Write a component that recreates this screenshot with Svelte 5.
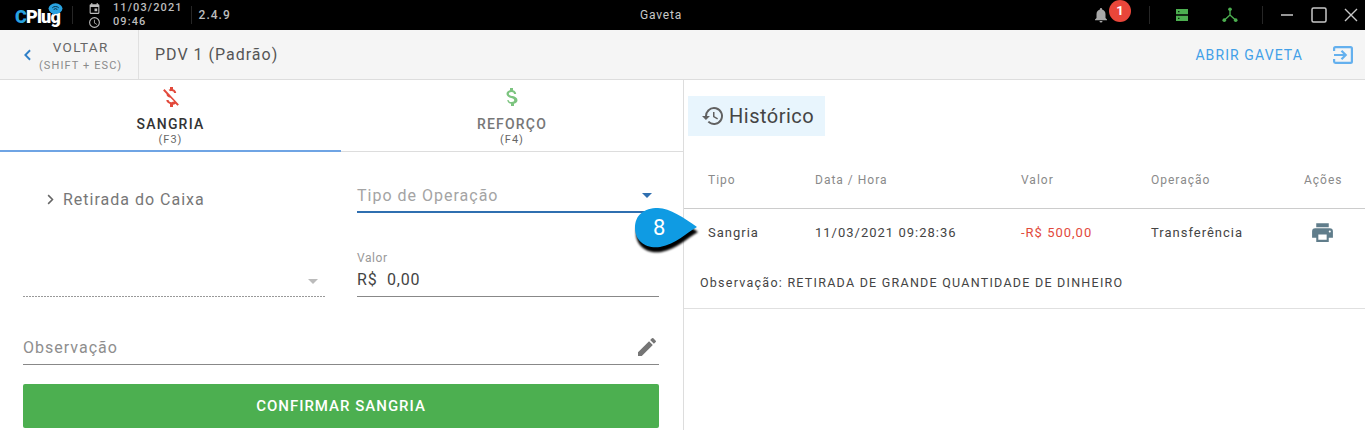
<script>
  const columns = ["Tipo", "Data / Hora", "Valor", "Operação", "Ações"];
</script>

<div class="app">
  <header class="titlebar">
    <div class="logo">
      <span class="logo-c">C</span><span class="logo-text">Plug</span>
      <svg class="logo-wifi" viewBox="0 0 16 14" width="15" height="13">
        <ellipse cx="8" cy="6" rx="7.5" ry="5.6" fill="#29a3e0" />
        <path d="M5 13l1-4 3 2z" fill="#29a3e0" />
        <path d="M4.5 5.2a5 5 0 0 1 7 0M6 7a3 3 0 0 1 4 0" fill="none" stroke="#06283a" stroke-width="1" />
      </svg>
    </div>
    <i class="sep logo-sep"></i>
    <div class="datetime">
      <div class="dt-icons">
        <svg viewBox="0 0 24 24" width="13" height="13"><path fill="#bdbdbd" d="M19 4h-1V2h-2v2H8V2H6v2H5a2 2 0 0 0-2 2v14a2 2 0 0 0 2 2h14a2 2 0 0 0 2-2V6a2 2 0 0 0-2-2zm0 16H5V9h14zM12 12h5v5h-5z" /></svg>
        <svg viewBox="0 0 24 24" width="13" height="13"><path fill="#bdbdbd" d="M12 2a10 10 0 1 0 0 20 10 10 0 0 0 0-20zm0 18a8 8 0 1 1 0-16 8 8 0 0 1 0 16zm.5-13H11v6l5.2 3.2.8-1.2-4.5-2.7z" /></svg>
      </div>
      <div class="dt-text"><span>11/03/2021</span><span>09:46</span></div>
    </div>
    <i class="sep date-sep"></i>
    <span class="version">2.4.9</span>
    <span class="window-title">Gaveta</span>
    <div class="tray">
      <div class="bell">
        <svg viewBox="0 0 24 24" width="18" height="18"><path fill="#a8a8a8" d="M12 22a2 2 0 0 0 2-2h-4a2 2 0 0 0 2 2zm6-6v-5c0-3.1-1.6-5.600-4.500-6.300V4a1.500 1.500 0 0 0-3 0v.7C7.600 5.400 6 7.900 6 11v5l-2 2v1h16v-1z" /></svg>
        <span class="badge">1</span>
      </div>
      <i class="sep tray-sep-a"></i>
      <svg class="tray-server" viewBox="0 0 12 12" width="12" height="12">
        <path fill="#4caf50" d="M0 0h12v5.300H0zM0 6.700h12V12H0z" />
        <path fill="#0a2a0a" d="M2 2h1.500v1.300H2zM2 8.700h1.500V10H2z" />
      </svg>
      <svg class="tray-net" viewBox="0 0 14 14" width="16" height="16">
        <path fill="none" stroke="#4caf50" stroke-width="1.200" d="M7 2v5L2 11.500M7 7l5 4.500" />
        <circle cx="7" cy="2" r="1.600" fill="#4caf50" /><circle cx="2" cy="11.500" r="1.600" fill="#4caf50" /><circle cx="12" cy="11.500" r="1.600" fill="#4caf50" />
      </svg>
      <i class="sep tray-sep-b"></i>
    </div>
    <div class="win-buttons">
      <svg viewBox="0 0 14 14" width="14" height="14"><path stroke="#c8c8c8" stroke-width="1.500" d="M1 7h12" /></svg>
      <svg viewBox="0 0 16 16" width="16" height="16"><rect x="1" y="1" width="14" height="14" rx="1.500" fill="none" stroke="#c8c8c8" stroke-width="1.500" /></svg>
      <svg viewBox="0 0 14 14" width="14" height="14"><path stroke="#c8c8c8" stroke-width="1.400" d="M1 1l12 12M13 1L1 13" /></svg>
    </div>
  </header>

  <div class="toolbar">
    <div class="back">
      <svg viewBox="0 0 10 14" width="9" height="12"><path fill="none" stroke="#2f80c8" stroke-width="2.200" d="M8 1.500L2.500 7 8 12.500" /></svg>
      <div class="back-text"><span>VOLTAR</span><small>(SHIFT + ESC)</small></div>
    </div>
    <div class="pdv">PDV 1 (Padrão)</div>
    <span class="open-drawer">ABRIR GAVETA</span>
    <svg class="exit-icon" viewBox="0 0 20 18" width="20" height="18">
      <path fill="none" stroke="#64b0ee" stroke-width="2.200" d="M1.100 5V2.500a1.400 1.400 0 0 1 1.400-1.400h15a1.400 1.400 0 0 1 1.400 1.400v13a1.400 1.400 0 0 1-1.400 1.400h-15a1.400 1.400 0 0 1-1.400-1.400V13M1 9h11M8.500 4.800 12.700 9l-4.200 4.200" />
    </svg>
  </div>

  <main class="content">
    <section class="left">
      <div class="tabs">
        <div class="tab active">
          <svg viewBox="0 0 24 24" width="24" height="24"><path fill="#e2493b" d="M12.500 5.900c1.800 0 2.400.9 2.500 2.100h2.200c-.1-1.700-1.100-3.300-3.200-3.800V2h-3v2.200c-.5.1-1 .3-1.400.5l1.500 1.500c.4-.2.900-.3 1.400-.3zM5.500 4.100 4.100 5.500 7.500 8.900c0 2.100 1.600 3.200 3.900 3.900l3.500 3.500c-.3.500-1 .9-2.400.9-2 0-2.800-.9-2.900-2.100H7.300c.1 2.200 1.800 3.400 3.700 3.800V22h3v-2.200c1-.2 1.800-.6 2.400-1.100l2.100 2.100 1.400-1.400z" /></svg>
          <strong>SANGRIA</strong>
          <small>(F3)</small>
        </div>
        <div class="tab">
          <svg viewBox="0 0 24 24" width="24" height="24"><path fill="#7cc47f" d="M11.800 10.900c-2.300-.6-3-1.200-3-2.100 0-1.100 1-1.900 2.700-1.900 1.800 0 2.400.8 2.500 2.100h2.200c-.1-1.700-1.100-3.300-3.200-3.800V3h-3v2.200c-1.900.4-3.500 1.700-3.500 3.600 0 2.300 1.900 3.500 4.700 4.100 2.500.6 3 1.500 3 2.400 0 .7-.5 1.800-2.700 1.800-2 0-2.800-.9-2.900-2.100H7.300c.1 2.200 1.800 3.400 3.700 3.800V21h3v-2.200c1.900-.4 3.500-1.500 3.500-3.500 0-2.800-2.400-3.800-4.700-4.400z" /></svg>
          <strong>REFORÇO</strong>
          <small>(F4)</small>
        </div>
      </div>

      <div class="form">
        <div class="form-row first">
          <div class="withdraw">
            <svg viewBox="0 0 10 14" width="9" height="11"><path fill="none" stroke="#666" stroke-width="2" d="M2 1.500 7.500 7 2 12.500" /></svg>
            <span>Retirada do Caixa</span>
          </div>
          <div class="select focused">
            <span>Tipo de Operação</span>
            <i class="caret blue"></i>
          </div>
        </div>
        <div class="form-row second">
          <div class="select disabled"><i class="caret grey"></i></div>
          <div class="amount">
            <label for="valor">Valor</label>
            <div id="valor" class="amount-value">R$&nbsp; 0,00</div>
          </div>
        </div>
        <div class="note">
          <span>Observação</span>
          <svg viewBox="0 0 24 24" width="24" height="24"><path fill="#757575" d="M3 17.250V21h3.750L17.810 9.940l-3.750-3.750zM20.710 7.040a1 1 0 0 0 0-1.410l-2.340-2.340a1 1 0 0 0-1.410 0l-1.830 1.830 3.750 3.750z" /></svg>
        </div>
        <button class="confirm">CONFIRMAR SANGRIA</button>
      </div>
    </section>

    <section class="right">
      <div class="history-title">
        <svg viewBox="0 0 24 24" width="24" height="24"><path fill="#616161" d="M13 3a9 9 0 0 0-9 9H1l3.890 3.890.07.140L9 12H6a7 7 0 1 1 2.050 4.950l-1.420 1.420A9 9 0 1 0 13 3zm-1 5v5l4.280 2.540.72-1.210-3.500-2.080V8z" /></svg>
        <span>Histórico</span>
      </div>
      <div class="table-head">
        {#each columns as col}<span>{col}</span>{/each}
      </div>
      <div class="table-row">
        <span>Sangria</span>
        <span>11/03/2021 09:28:36</span>
        <span class="negative">-R$ 500,00</span>
        <span>Transferência</span>
        <span class="action">
          <svg viewBox="0 0 24 24" width="25" height="25"><path fill="#607d8b" d="M19 8H5a3 3 0 0 0-3 3v6h4v4h12v-4h4v-6a3 3 0 0 0-3-3zm-3 11H8v-5h8zm3-7a1 1 0 1 1 0-2 1 1 0 0 1 0 2zm-1-9H6v4h12z" /></svg>
        </span>
      </div>
      <div class="observation">Observação: RETIRADA DE GRANDE QUANTIDADE DE DINHEIRO</div>
    </section>
  </main>

  <div class="callout">
    <svg viewBox="0 0 68 56" width="68" height="56">
      <defs>
        <filter id="callout-blur" x="-10%" y="-10%" width="120%" height="120%"><feGaussianBlur stdDeviation="0.8" /></filter>
      </defs>
      <path fill="#000" filter="url(#callout-blur)" transform="translate(1 5)" d="M24 5C36 5 50 15 63 24 52 30 42 41 26 44 12 46 1 38 1 25 1 12 10 5 24 5z" />
      <path fill="#0f9be3" d="M24 5C36 5 50 15 63 24 52 30 42 41 26 44 12 46 1 38 1 25 1 12 10 5 24 5z" />
    </svg>
    <span>8</span>
  </div>
</div>

<style>
  :global(body) {
    background: #fff;
  }
  .app {
    position: relative;
    width: 1365px;
    height: 430px;
    overflow: hidden;
    font-family: Roboto, "Liberation Sans", sans-serif;
    color: #333;
    background: #fff;
    letter-spacing: 1px;
  }

  .titlebar {
    position: relative;
    display: flex;
    align-items: center;
    height: 30px;
    background: #000;
    color: #bdbdbd;
    font-size: 11px;
  }
  .sep {
    display: block;
    flex: none;
    width: 1px;
    height: 18px;
    background: #262626;
  }
  .logo-sep {
    margin-left: 10px;
  }
  .date-sep {
    margin-left: 8px;
  }
  .tray-sep-a {
    margin-left: 18px;
  }
  .tray-sep-b {
    margin-left: 24px;
  }
  .logo {
    position: relative;
    width: 47px;
    height: 30px;
    margin-left: 15px;
    box-sizing: border-box;
    padding-top: 7px;
    font-size: 18px;
    line-height: 20px;
    font-weight: 900;
    letter-spacing: -0.8px;
    white-space: nowrap;
    color: #fff;
  }
  .logo-c {
    color: #29a3e0;
  }
  .logo-wifi {
    position: absolute;
    top: 3px;
    right: -1px;
  }
  .datetime {
    display: flex;
    align-items: center;
    gap: 12px;
    margin-left: 15px;
  }
  .dt-icons {
    display: flex;
    flex-direction: column;
    gap: 1px;
  }
  .dt-icons svg {
    display: block;
  }
  .dt-text {
    display: flex;
    flex-direction: column;
    line-height: 14px;
    font-weight: 500;
    letter-spacing: 1.1px;
  }
  .version {
    margin-left: 7px;
    font-size: 12px;
    font-weight: 500;
  }
  .window-title {
    position: absolute;
    left: 640px;
    top: 8px;
    font-size: 12px;
    line-height: 14px;
    letter-spacing: 0.8px;
    color: #c8c8c8;
  }
  .tray {
    display: flex;
    align-items: center;
    margin-left: auto;
  }
  .bell {
    position: relative;
    width: 39px;
    height: 30px;
    display: flex;
    align-items: center;
  }
  .badge {
    position: absolute;
    left: 17px;
    top: 0;
    width: 22px;
    height: 22px;
    border-radius: 50%;
    background: #e9463a;
    color: #fff;
    font-size: 13px;
    font-weight: 700;
    line-height: 22px;
    text-align: center;
    letter-spacing: 0;
  }
  .tray-server {
    margin-left: 26px;
  }
  .tray-net {
    margin-left: 34px;
  }
  .win-buttons {
    display: flex;
    align-items: center;
    gap: 17px;
    margin-left: 17px;
    margin-right: 7px;
  }

  .toolbar {
    display: flex;
    align-items: center;
    height: 50px;
    box-sizing: border-box;
    background: #f5f5f5;
    border-bottom: 1px solid #ddd;
  }
  .back {
    display: flex;
    align-items: center;
    width: 139px;
    height: 49px;
    padding-left: 23px;
    box-sizing: border-box;
    border-right: 1px solid #e0e0e0;
  }
  .back-text {
    display: flex;
    flex-direction: column;
    align-items: center;
    margin-left: 7px;
    padding-top: 4px;
    color: #666;
  }
  .back-text span {
    font-size: 13.500px;
    line-height: 16px;
    letter-spacing: 1.300px;
  }
  .back-text small {
    margin-top: 3px;
    font-size: 11px;
    line-height: 16px;
    letter-spacing: 1.100px;
    color: #8a8a8a;
    white-space: nowrap;
  }
  .pdv {
    margin-left: 16px;
    font-size: 16px;
    color: #555;
  }
  .open-drawer {
    margin-left: auto;
    font-size: 14px;
    letter-spacing: 1.100px;
    color: #42a0e8;
  }
  .exit-icon {
    margin: 0 12px 0 30px;
  }

  .content {
    display: flex;
    height: 350px;
  }
  .left {
    width: 684px;
    box-sizing: border-box;
    border-right: 1px solid #ddd;
    flex: none;
  }
  .tabs {
    display: flex;
    height: 72px;
    box-sizing: border-box;
    border-bottom: 1px solid #ddd;
  }
  .tab {
    flex: 1;
    display: flex;
    flex-direction: column;
    align-items: center;
    padding-top: 5px;
    box-sizing: border-box;
    height: 72px;
  }
  .tab.active {
    flex: none;
    width: 341px;
    border-bottom: 2px solid #6fa4e4;
  }
  .tab svg {
    display: block;
    height: 24px;
  }
  .tab strong {
    font-size: 14px;
    font-weight: 500;
    line-height: 14px;
    margin-top: 8px;
    letter-spacing: 1.200px;
    color: #777;
  }
  .tab.active strong {
    color: #333;
  }
  .tab small {
    font-size: 11px;
    line-height: 16px;
    margin-top: 1px;
    color: #666;
  }

  .form {
    padding: 0 24px 0 23px;
  }
  .form-row {
    display: grid;
    grid-template-columns: 302px 302px;
    column-gap: 32px;
  }
  .form-row.first {
    height: 61px;
  }
  .withdraw {
    display: flex;
    align-items: center;
    gap: 8px;
    box-sizing: border-box;
    height: 61px;
    padding: 33px 0 0 23px;
    font-size: 16px;
    color: #777;
  }
  .select {
    position: relative;
    display: flex;
    align-items: center;
    justify-content: space-between;
    box-sizing: border-box;
  }
  .select.focused {
    height: 61px;
    padding-top: 28px;
    padding-right: 7px;
    border-bottom: 2px solid #2f6fb0;
    font-size: 16px;
    color: #a4a4a4;
  }
  .select.disabled {
    height: 84px;
    padding-top: 52px;
    justify-content: flex-end;
    padding-right: 7px;
    background: linear-gradient(to right, #999 2px, transparent 2px) left bottom / 3px 1px repeat-x;
  }
  .caret {
    display: block;
    width: 0;
    height: 0;
    border-left: 5px solid transparent;
    border-right: 5px solid transparent;
  }
  .caret.blue {
    border-top: 5px solid #2f6fb0;
  }
  .caret.grey {
    border-top: 5px solid #bbb;
  }
  .amount {
    height: 84px;
    box-sizing: border-box;
    padding-top: 38px;
    border-bottom: 1px solid #888;
  }
  .amount label {
    display: block;
    font-size: 12px;
    line-height: 14px;
    color: #999;
    letter-spacing: 0.6px;
  }
  .amount-value {
    font-size: 16px;
    line-height: 22px;
    margin-top: 4px;
    color: #444;
    letter-spacing: 0.8px;
  }
  .note {
    display: flex;
    align-items: center;
    justify-content: space-between;
    height: 62px;
    margin-top: 6px;
    padding-top: 27px;
    width: 636px;
    box-sizing: border-box;
    border-bottom: 1px solid #888;
    font-size: 16px;
    color: #8e8e8e;
  }
  .confirm {
    display: block;
    width: 636px;
    height: 44px;
    margin-top: 19px;
    border: 0;
    border-radius: 2px;
    background: #4caf50;
    color: #fff;
    font-family: inherit;
    font-size: 15px;
    font-weight: 500;
    letter-spacing: 1px;
  }

  .right {
    flex: 1;
  }
  .history-title {
    display: flex;
    align-items: center;
    gap: 4px;
    width: 137px;
    height: 40px;
    box-sizing: border-box;
    margin: 16px 0 0 4px;
    padding-left: 13px;
    background: #e8f5fd;
    font-size: 20px;
    letter-spacing: 0.5px;
    color: #444;
  }
  .table-head,
  .table-row {
    display: grid;
    grid-template-columns: 107px 206px 130px 153px 1fr;
    padding-left: 24px;
    align-items: center;
  }
  .table-head {
    height: 73px;
    padding-top: 16px;
    box-sizing: border-box;
    border-bottom: 1px solid #ccc;
    font-size: 12px;
    color: #8a8a8a;
  }
  .table-row {
    height: 47px;
    font-size: 13px;
    color: #444;
  }
  .negative {
    color: #e2493b;
  }
  .action {
    padding-left: 6px;
  }
  .action svg {
    display: block;
  }
  .observation {
    height: 53px;
    box-sizing: border-box;
    padding: 4px 0 0 16px;
    line-height: 46px;
    border-bottom: 1px solid #e0e0e0;
    font-size: 12.500px;
    color: #444;
    letter-spacing: 1.250px;
  }

  .callout {
    position: absolute;
    left: 634px;
    top: 203px;
    width: 68px;
    height: 56px;
  }
  .callout svg {
    display: block;
  }
  .callout span {
    position: absolute;
    left: 19px;
    top: 13px;
    font-size: 22px;
    line-height: 24px;
    letter-spacing: 0;
    color: #fff;
  }
</style>
